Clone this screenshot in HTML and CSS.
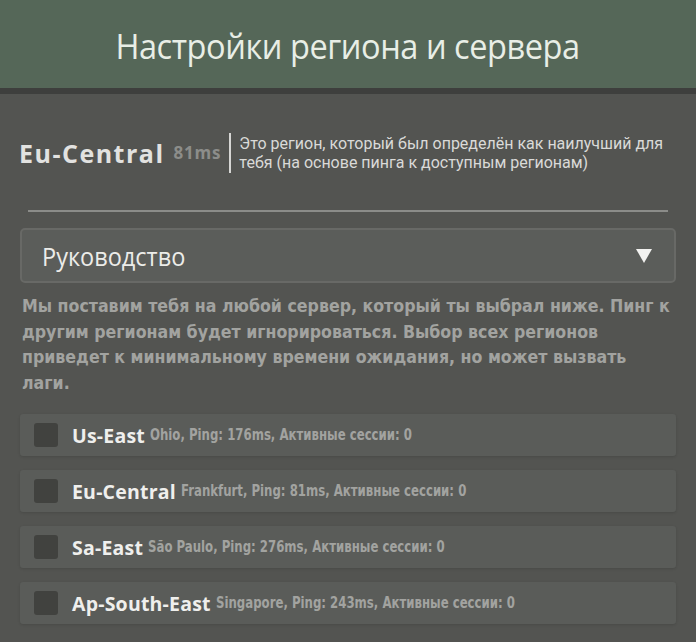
FILE: index.html
```html
<!DOCTYPE html>
<html lang="ru">
<head>
    <meta charset="UTF-8">
    <meta name="viewport" content="width=device-width, initial-scale=1.0">
    <title>Настройки региона и сервера</title>
    <link rel="stylesheet" href="styles.css">
</head>
<body>
    <div class="header"><span class="title">Настройки региона и сервера</span></div>

    <div class="content">
        <div class="best">
            <div class="best-name">Eu-Central</div>
            <div class="best-ping">81ms</div>
            <div class="best-info">Это регион, который был определён как наилучший для тебя (на основе пинга к доступным регионам)</div>
        </div>

        <div class="divider"></div>

        <div class="select">
            <span class="select-text">Руководство</span>
            <span class="arrow"></span>
        </div>

        <p class="note">Мы поставим тебя на любой сервер, который ты выбрал ниже. Пинг к другим регионам будет игнорироваться. Выбор всех регионов приведет к минимальному времени ожидания, но может вызвать лаги.</p>

        <div class="regions">
            <div class="region">
                <span class="check"></span>
                <span class="region-name">Us-East</span>
                <span class="region-info">Ohio, Ping: 176ms, Активные сессии: 0</span>
            </div>
            <div class="region">
                <span class="check"></span>
                <span class="region-name">Eu-Central</span>
                <span class="region-info">Frankfurt, Ping: 81ms, Активные сессии: 0</span>
            </div>
            <div class="region">
                <span class="check"></span>
                <span class="region-name">Sa-East</span>
                <span class="region-info">São Paulo, Ping: 276ms, Активные сессии: 0</span>
            </div>
            <div class="region">
                <span class="check"></span>
                <span class="region-name">Ap-South-East</span>
                <span class="region-info">Singapore, Ping: 243ms, Активные сессии: 0</span>
            </div>
        </div>
    </div>
</body>
</html>
```

FILE: styles.css
```css
body {
    margin: 0;
    background-color: #535451;
    font-family: 'Roboto', sans-serif;
    color: #e6e6e4;
}
.header {
    height: 88px;
    background-color: #556758;
    border-bottom: 6px solid #3e3f3d;
    display: flex;
    align-items: center;
    justify-content: center;
}
.title {
    display: inline-block;
    font-family: 'Open Sans', sans-serif;
    font-size: 35px;
    color: #e8eee6;
    letter-spacing: -0.5px;
    transform: scaleX(0.93);
    margin-top: 2px;
}
.content {
    padding: 0 20px;
}
.best {
    display: flex;
    align-items: center;
    margin-top: 36px;
    height: 46px;
}
.best-name {
    font-family: 'Open Sans', sans-serif;
    font-weight: 700;
    font-size: 25px;
    letter-spacing: 1.5px;
    color: #e2e2e0;
    margin-left: -1px;
}
.best-ping {
    font-family: 'Open Sans', sans-serif;
    font-weight: 700;
    font-size: 17px;
    letter-spacing: 0.8px;
    color: #8c8d8a;
    margin-left: 9px;
    padding-right: 8px;
    border-right: 2px solid #d6d6d4;
    line-height: 40px;
}
.best-info {
    font-size: 16px;
    line-height: 19px;
    color: #dadad8;
    margin-left: 8px;
    width: 436px;
}
.divider {
    height: 2px;
    background-color: #8b8c89;
    margin: 34px 8px 0;
}
.select {
    margin-top: 16px;
    height: 51px;
    border: 2px solid #686966;
    border-radius: 5px;
    background-color: #5b5d5a;
    display: flex;
    align-items: center;
    justify-content: space-between;
    padding: 0 22px 0 20px;
}
.select-text {
    display: inline-block;
    font-family: 'Open Sans', sans-serif;
    font-size: 25px;
    color: #ecece9;
    transform: scaleX(0.94);
    transform-origin: left center;
}
.arrow {
    width: 0;
    height: 0;
    border-left: 8px solid transparent;
    border-right: 8px solid transparent;
    border-top: 14px solid #f2f2f0;
}
.note {
    margin: 11px 2px 0;
    font-family: 'DejaVu Sans Condensed', 'Roboto', sans-serif;
    font-weight: 700;
    font-size: 17.6px;
    line-height: 25.5px;
    color: #a2a3a0;
}
.regions {
    margin-top: 18px;
}
.region {
    display: flex;
    align-items: center;
    height: 42px;
    margin-bottom: 14px;
    background-color: #5a5c59;
    box-shadow: 0 1px 3px rgba(0, 0, 0, 0.12);
    border-radius: 3px;
    padding-left: 14px;
}
.check {
    width: 24px;
    height: 24px;
    border-radius: 3px;
    background-color: #41423f;
    margin-right: 14px;
}
.region-name {
    font-family: 'Open Sans', sans-serif;
    font-weight: 700;
    font-size: 19.5px;
    letter-spacing: 0.2px;
    color: #efefed;
    margin-right: 5px;
}
.region-info {
    display: inline-block;
    font-family: 'DejaVu Sans Condensed', 'Roboto', sans-serif;
    font-weight: 700;
    font-size: 15px;
    color: #a2a3a0;
    transform: scaleX(0.87);
    transform-origin: left center;
    white-space: nowrap;
}
```
